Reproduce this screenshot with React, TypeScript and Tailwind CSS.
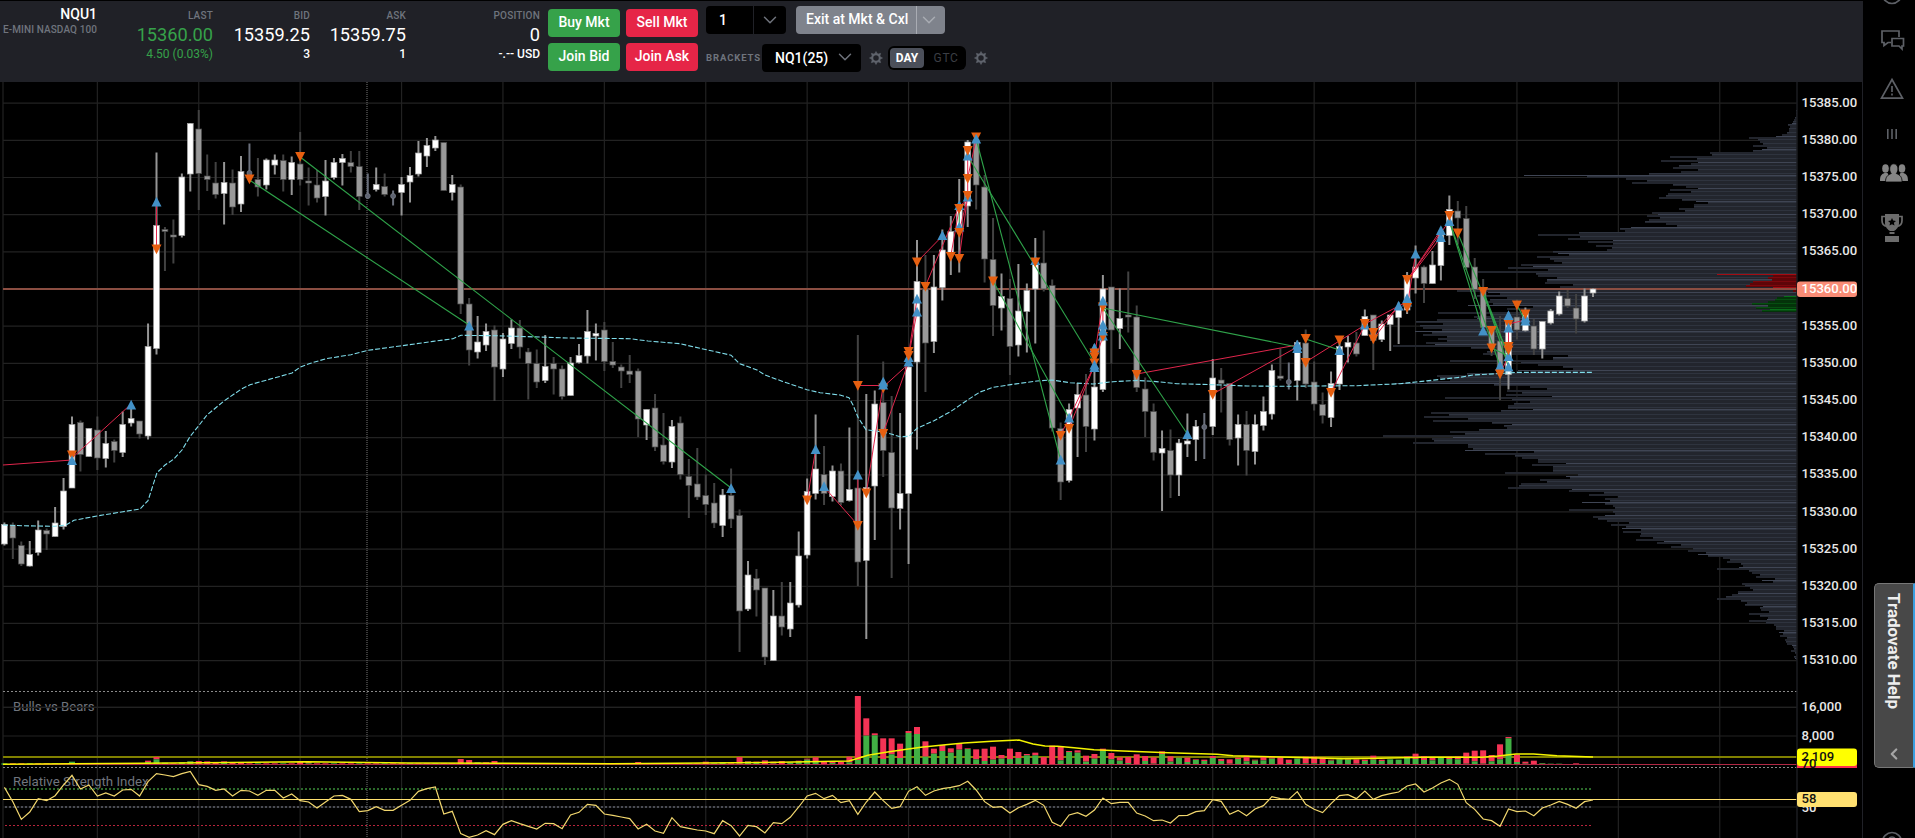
import { ChevronDown, ChevronLeft } from "lucide-react";

type Kind = "u" | "d" | "n";
type Candle = [Kind, number, number, number, number];

const STEP = 8.45;
const X0 = 4.4;
const AXIS = 1797;
const cx = (i: number) => X0 + STEP * i;

// kind, high, body top, body bottom, low
const CANDLES: Candle[] = [
  ["u", 522.5, 524.5, 544, 545.5], ["d", 522.5, 525, 538, 559], ["d", 541.5, 545.5, 564, 566], ["u", 541, 554.5, 566, 566.5],
  ["u", 520.5, 530, 552.5, 555.5], ["d", 528.5, 530.5, 534, 550], ["u", 507, 523, 536.5, 536.5], ["u", 478, 491, 526.5, 529.5],
  ["u", 416.5, 424.5, 488, 488], ["d", 420.5, 422.5, 454.5, 471.5], ["u", 428.5, 428.5, 456.5, 456.5], ["d", 416.5, 430, 458, 470],
  ["u", 431, 443.5, 458.5, 467.5], ["d", 439.5, 441.5, 450.5, 462.5], ["u", 411.5, 424.5, 452.5, 457], ["u", 408, 418.5, 423, 426.5],
  ["d", 421, 421, 434, 438.5], ["u", 323.5, 346.5, 436, 439.5], ["u", 152.5, 225.5, 348.5, 354.5], ["d", 227, 229.5, 231.5, 271],
  ["d", 219.5, 235, 237, 263.5], ["u", 173.5, 177, 235.5, 237.5], ["u", 123, 123.5, 174, 191.5], ["d", 110, 129, 173.5, 210],
  ["d", 154.5, 176, 179.5, 191], ["d", 162, 183, 194.5, 198.5], ["u", 162, 182.5, 193.5, 224.5], ["d", 169.5, 183, 207, 215],
  ["u", 156, 171.5, 204, 212], ["n", 143.5, 172, 174, 182], ["d", 158, 179.5, 187, 196.5], ["u", 158.5, 160, 185, 189.5],
  ["u", 154.5, 160, 165, 174.5], ["d", 154.5, 160.5, 179.5, 191.5], ["u", 156.5, 162.5, 179.5, 195], ["d", 132, 164, 179.5, 185.5],
  ["d", 167.5, 181, 183, 205.5], ["d", 170, 185, 198, 202.5], ["u", 160, 181, 196.5, 215.5], ["u", 158, 162.5, 177.5, 179.5],
  ["u", 154, 158.5, 162.5, 185.5], ["d", 151, 162.5, 166.5, 172.5], ["d", 151, 166.5, 196.5, 210], ["n", 173.5, 195, 197, 198.5],
  ["u", 167.5, 184.5, 189.5, 191.5], ["d", 173.5, 186.5, 194.5, 196.5], ["n", 190.5, 195, 197, 205.5], ["u", 177, 184.5, 192.5, 215.5],
  ["u", 167, 175.5, 182, 202.5], ["u", 141, 153, 174, 176.5], ["u", 138, 145.5, 156, 167], ["u", 136, 140, 148, 151],
  ["d", 142.5, 142.5, 190.5, 190.5], ["u", 175, 184.5, 192.5, 200.5], ["d", 184.5, 187, 304, 314], ["d", 298, 304, 350, 365.5],
  ["u", 316, 342, 352, 358.5], ["u", 323.5, 331.5, 345, 351], ["d", 325.5, 330, 367, 401], ["u", 333, 339, 369, 377],
  ["u", 319.5, 328, 343.5, 349], ["d", 320, 328, 347, 358.5], ["d", 348, 352, 363.5, 399.5], ["d", 349.5, 363.5, 382, 388],
  ["u", 335, 366.5, 380.5, 383], ["d", 357, 363.5, 369, 394.5], ["d", 365.5, 369, 396.5, 399.5], ["u", 357, 363, 395.5, 395.5],
  ["u", 344, 355.5, 362.5, 363.5], ["u", 310, 331.5, 356, 363.5], ["u", 323.5, 333.5, 336, 360.5], ["d", 322, 330, 361.5, 371],
  ["d", 342, 361.5, 365, 368], ["d", 364.5, 367, 371, 388], ["d", 355, 371, 374.5, 383], ["d", 368.5, 371, 419, 437],
  ["u", 409.5, 409.5, 425, 440], ["d", 394, 408, 447, 451], ["d", 413, 445, 461.5, 464.5], ["u", 420, 426.5, 462, 468],
  ["d", 416.5, 423, 474.5, 479.5], ["d", 459, 476.5, 485.5, 518], ["d", 448, 484, 497, 500], ["d", 474.5, 495.5, 504.5, 515],
  ["d", 483, 503, 523, 528], ["u", 489, 495, 525.5, 537], ["d", 468.5, 495.5, 519, 528], ["d", 509.5, 515.5, 611, 652],
  ["u", 561, 575, 609, 611], ["d", 569, 578.5, 590, 616.5], ["d", 588, 588, 657, 665], ["u", 590, 616, 660.5, 660.5],
  ["d", 582, 616, 627, 635.5], ["u", 582, 603, 629, 637], ["u", 531.5, 556, 605, 607.5], ["u", 478.5, 491.5, 555, 558.5],
  ["u", 414.5, 469, 493.5, 499.5], ["d", 446, 474.5, 493.5, 505], ["u", 465.5, 471, 496.5, 501.5], ["d", 463.5, 471, 502.5, 505.5],
  ["u", 427.5, 489.5, 500.5, 501.5], ["d", 335, 488, 562, 586], ["u", 394, 487.5, 560.5, 639], ["u", 390.5, 404, 486, 540],
  ["d", 361.5, 402.5, 450.5, 477], ["d", 396, 452.5, 508, 578], ["u", 413, 493.5, 508.5, 529.5], ["u", 363, 367, 493.5, 564],
  ["u", 240, 281.5, 362, 449.5], ["d", 255, 289, 343, 392], ["u", 255, 287, 341.5, 353], ["u", 229.5, 250, 287.5, 300.5],
  ["u", 216, 231.5, 253, 275], ["u", 179, 208.5, 230, 272.5], ["u", 140, 142, 206, 227], ["d", 137, 140, 185, 209.5],
  ["d", 175, 187, 259, 282.5], ["d", 218, 259.5, 305.5, 336], ["u", 273.5, 296.5, 308, 330.5], ["d", 279, 298.5, 346.5, 375],
  ["u", 264, 311, 345, 356.5], ["u", 283.5, 290.5, 311.5, 352.5], ["u", 238, 263, 289, 343.5], ["d", 230.5, 263, 289, 291.5],
  ["d", 279.5, 285.5, 428, 431.5], ["d", 422.5, 428.5, 482, 500], ["u", 403.5, 409.5, 480.5, 482.5], ["u", 383, 394.5, 408, 457],
  ["d", 374, 395, 426.5, 452], ["u", 344.5, 387, 429, 440.5], ["u", 275, 289, 389.5, 392], ["d", 287, 287, 330, 363.5],
  ["u", 288.5, 318.5, 328.5, 349], ["d", 271.5, 315, 317, 332.5], ["d", 305.5, 317, 387.5, 392], ["d", 377.5, 389, 411.5, 437],
  ["d", 403.5, 411.5, 452.5, 460.5], ["u", 430.5, 448.5, 453, 511], ["d", 429.5, 450.5, 475, 498], ["u", 439, 443, 475, 496],
  ["u", 413.5, 441, 444, 457], ["u", 420, 426.5, 439.5, 461], ["n", 413, 426, 428, 459], ["u", 359, 378, 426.5, 435],
  ["d", 368, 380, 383.5, 412.5], ["d", 383.5, 383.5, 439.5, 445.5], ["u", 414.5, 424.5, 438, 465.5], ["d", 411, 424.5, 450.5, 475.5],
  ["u", 414.5, 424.5, 451.5, 464.5], ["u", 396.5, 411.5, 425.5, 430.5], ["u", 364.5, 370.5, 414, 419.5], ["d", 348.5, 376, 378.5, 380.5],
  ["n", 362.5, 381, 383, 389.5], ["u", 340.5, 342.5, 380.5, 400.5], ["d", 329.5, 343, 384, 388], ["d", 361.5, 382, 404, 410.5],
  ["d", 392.5, 404.5, 415.5, 423.5], ["u", 371.5, 383.5, 417.5, 427], ["u", 342.5, 346.5, 384, 390], ["u", 336, 342.5, 347, 362.5],
  ["d", 332, 343, 354, 356.5], ["u", 309.5, 316.5, 335.5, 335.5], ["d", 315, 315, 340.5, 370], ["u", 320.5, 324, 339.5, 342],
  ["u", 315, 315, 324.5, 351], ["u", 302.5, 309.5, 317.5, 344], ["u", 272, 278.5, 310, 314], ["u", 245.5, 267, 278, 293.5],
  ["d", 265.5, 267, 283.5, 303], ["u", 251, 265, 283.5, 283.5], ["u", 227, 235, 265.5, 280.5], ["u", 195.5, 209.5, 235.5, 245],
  ["d", 201, 211, 218, 244.5], ["d", 206, 218.5, 267.5, 270], ["d", 258, 267, 289.5, 299], ["d", 279, 289.5, 327.5, 332.5],
  ["d", 327, 330.5, 348, 356], ["d", 316, 341, 367, 400], ["u", 312.5, 317.5, 374.5, 389.5], ["d", 299.5, 317, 330, 339.5],
  ["u", 307.5, 311.5, 330.5, 331.5], ["d", 319, 326, 349, 355], ["u", 321.5, 321.5, 349, 358.5], ["u", 309, 311, 323, 324.5],
  ["u", 291.5, 296, 314, 315.5], ["d", 290, 298.5, 306, 308], ["d", 294, 308, 319, 333.5], ["u", 288.5, 296, 321, 322.5],
  ["u", 288.5, 289, 293, 297],
];

const VWAP =
  "3,525 22,525.7 55,526.3 66,525 74,520.3 97,516 123,511.7 140,509 148,500.7 157,472.7 165,465 173.5,459.3 182,450 190,436.7 199,425.3 207,415 224,401 241,389.3 250,384.7 267,380 292,373 300,367.3 309,363.7 326,358.7 351,354.7 368,350.3 400,346 433,341.4 453,338.7 461,335.3 493,335.7 520,336.4 567,338 630,338.7 648,341 680,343.7 700,348.3 731,355.2 739.5,363.6 757,370 765,375 782,381.2 793,385 807,389.7 820,392.7 840,395 849,397.7 853,405 858,417.3 866,429.7 883,432 892,434.3 900,436.7 909,436.3 917,428.3 934,420.7 951,411.3 968,399.7 980,392 993,387.3 1013,384.3 1037,381 1052,380 1070,382.7 1093,384 1113,381.7 1137,380.5 1153,381.3 1177,383.7 1213,384.7 1247,386 1287,386.3 1313,386 1357,385.7 1400,383.7 1416,382 1460,377.3 1473,375 1500,373.5 1517,372.4 1593,372.4";

// b = buy arrow, s = sell arrow; later entries are drawn on top
const MARKS: ["b" | "s", number, number][] = [
  ["s", 8, 455], ["b", 8, 460.5], ["b", 15, 405], ["b", 18, 202], ["s", 18, 249], ["s", 29, 179], ["s", 35, 156.5],
  ["b", 55, 326], ["b", 86, 488.5], ["s", 95, 500], ["b", 96, 449.5], ["b", 97, 486.5], ["s", 101, 385.5], ["b", 101, 475],
  ["s", 101, 525.5], ["s", 102, 493], ["s", 104, 388], ["b", 104, 382], ["b", 104, 385], ["s", 104, 433.5], ["b", 107, 357.5],
  ["b", 107, 362], ["s", 107, 351.5], ["s", 107, 355.5], ["s", 108, 262], ["b", 108, 299], ["b", 108, 312], ["s", 109, 286.5],
  ["b", 111, 235.5], ["s", 112, 256.5], ["b", 113, 205.5], ["s", 113, 208.5], ["b", 113, 227], ["s", 113, 232.5], ["s", 113, 258.5],
  ["b", 114, 156], ["s", 114, 150.5], ["s", 114, 178.5], ["b", 114, 197], ["s", 114, 195.5], ["s", 115, 137], ["b", 115, 139],
  ["s", 117, 281], ["b", 122, 260.5], ["s", 122, 262], ["s", 125, 435.5], ["b", 125, 460], ["s", 126, 428.5], ["b", 126, 418],
  ["b", 129, 348], ["s", 129, 353], ["s", 129, 357], ["s", 129, 363], ["b", 129, 365], ["b", 129, 367.5], ["s", 130, 307],
  ["b", 130, 301], ["b", 130, 325], ["b", 130, 336], ["s", 130, 336.5], ["b", 130, 331], ["s", 134, 374.5], ["b", 140, 434.5],
  ["s", 143, 394.5], ["b", 153, 345], ["b", 153, 348.5], ["s", 154, 338.5], ["s", 154, 362.5], ["s", 157, 392.5], ["s", 158, 340],
  ["b", 158, 350.5], ["b", 161, 325], ["s", 161, 323.5], ["s", 162, 332.5], ["s", 162, 339], ["b", 165, 306], ["s", 166, 279.5],
  ["b", 166, 302], ["b", 166, 298.5], ["s", 166, 307.5], ["b", 167, 254], ["b", 170, 237.5], ["b", 170, 230.5], ["b", 171, 221.5],
  ["s", 171, 215.5], ["s", 172, 233], ["b", 175, 331], ["s", 175, 291.5], ["s", 176, 330.5], ["s", 176, 348], ["b", 177, 366],
  ["s", 177, 374], ["s", 178, 324], ["b", 178, 315.5], ["b", 178, 328], ["b", 178, 356.5], ["s", 178, 346.5], ["s", 178, 350],
  ["b", 178, 367], ["s", 179, 305], ["b", 180, 318], ["b", 180, 321], ["s", 180, 314],
];

const LOSSES = [
  [8, 458, 15, 404], [18, 202, 18, 249], [95, 500, 96, 450], [97, 487, 101, 525], [101, 475, 101, 525], [102, 493, 104, 385],
  [101, 385.5, 104, 385.5], [104, 387, 107, 364], [104, 433, 107, 362], [107, 355, 108, 299], [107, 357, 108, 312],
  [108, 262, 111, 236], [109, 286, 113, 206], [112, 256, 113, 208], [113, 258, 114, 196], [113, 232, 114, 196], [113, 206, 114, 200],
  [114, 178, 115, 139], [114, 196, 114, 156], [125, 435, 126, 418], [126, 428, 129, 365], [126, 418, 129, 365], [129, 357, 130, 301],
  [129, 363, 130, 336], [130, 301, 130, 336], [134, 374, 153, 345], [143, 394, 153, 347], [154, 362, 161, 325], [157, 392, 161, 325],
  [161, 324, 165, 306], [162, 339, 165, 306], [162, 333, 165, 306], [165, 306, 166, 302], [166, 307, 167, 254], [166, 280, 170, 230],
  [166, 281, 170, 237], [166, 280, 171, 221], [177, 374, 178, 356], [178, 324, 178, 350], [178, 324, 180, 320],
];

const WINS = [
  [29, 180, 55, 325], [35, 157, 86, 488], [113, 208, 113, 227], [114, 156, 129, 363], [115, 139, 125, 460], [117, 281, 126, 418],
  [130, 308, 153, 347], [130, 308, 140, 434], [154, 339, 158, 350], [171, 221, 177, 366], [171, 221, 175, 331], [172, 233, 178, 356],
  [175, 291, 178, 356], [176, 348, 178, 356], [175, 291, 178, 367], [179, 305, 180, 321],
];

// left edge of every volume-at-price row, one row per tick going down
const PROFILE = [
  1249, 1249, 1248, 1247, 1245, 1243, 1240, 1236, 1224, 1231, 1228, 1226, 1222, 1205, 1188, 1107, 1133, 1139, 1148, 1120, 1160, 1145, 1120,
  990, 996, 870, 950, 842, 955, 933, 897, 878, 953, 903, 807, 433, 621, 738, 802, 755, 880, 918, 955, 870, 932, 863, 858, 838, 905, 947,
  985, 942, 942, 897, 915, 816, 835, 800, 840, 808, 795, 857, 890, 753, 720, 735, 597, 475, 600, 564, 700, 625, 700, 648, 697, 680, 520,
  533, 567, 472, 510, 522, 545, 423, 460, 384, 505, 280, 468, 474, 530, 500, 500, 495, 578, 540, 215, 232, 325, 360, 290, 380, 330, 310,
  340, 263, 460, 380, 420, 175, 330, 283, 290, 172, 108, 190, 120, 128, 185, 105, 157, 128, 200, 175, 200, 138, 165, 40, 272, 345, 320,
  310, 563, 520, 520, 210, 423, 475, 550, 580, 415, 450, 260, 170, 180, 210, 140, 45, 343, 450, 500, 380, 425, 377, 515, 195, 395, 450,
  403, 385, 385, 458, 362, 152, 207, 133, 265, 160, 335, 395, 372, 380, 297, 210, 255, 10, 220, 155, 163, 100, 265, 265, 280, 255, 462,
  315, 405, 427, 475, 475, 558, 457, 520, 518, 520, 375, 595, 558, 570, 480, 500, 422, 417, 383, 575, 567, 673, 627, 715, 675, 690, 605,
  675, 700, 705, 568, 698, 706, 675, 640, 655, 680, 748, 693, 738, 725, 783, 730, 783, 780, 818, 767, 852, 832, 903, 873, 940, 923, 978,
  955, 985, 1030, 1050, 1040, 1083, 1088, 1077, 1012, 1107, 1115, 1140, 1127, 1185, 1145, 1180, 1085, 1095, 1110, 1120, 1075, 1073, 1057,
  1037, 1012, 1083, 1100, 1095, 1148, 1140, 1143, 1168, 1108, 1140, 1165, 1160, 1107, 1158, 1183, 1187, 1187, 1213, 1198, 1210, 1200,
  1220, 1215, 1217, 1222, 1235, 1240, 1243, 1233, 1245, 1248, 1243, 1245, 1247,
];
const ASKS = [1012, 1178, 1165, 1175, 1118, 1110, 1097, 1180, 1180, 1240];
const BIDS = [1213, 1190, 1185, 1165, 1115, 1165, 1127, 1170, 1147];

// total top, bull top
const VOLUME: Record<number, [number, number]> = {
  8: [245, 245], 17: [242, 246], 18: [231, 238], 19: [248, 248], 21: [247, 247], 22: [243, 244], 23: [243, 252], 24: [244, 252],
  25: [246, 252], 26: [244, 247], 27: [246, 252], 28: [248, 252], 35: [245, 252], 36: [246, 250], 54: [237, 251], 55: [240, 249],
  56: [246, 247], 57: [247, 250], 58: [243, 249], 75: [246, 252], 76: [249, 250], 83: [245, 252], 85: [246, 247], 87: [231, 251],
  88: [243, 245], 89: [245, 248], 90: [241, 252], 91: [245, 251], 92: [243, 252], 93: [247, 248], 94: [242, 245], 95: [236, 239],
  96: [232, 246], 97: [243, 252], 98: [246, 249], 99: [246, 252], 100: [230, 247], 101: [48, 240], 102: [115, 167], 103: [160, 166],
  104: [175, 237], 105: [175, 223], 106: [191, 234], 107: [153, 159], 108: [141, 162], 109: [184, 230], 110: [206, 221],
  111: [195, 213], 112: [205, 218], 113: [192, 209], 114: [205, 207], 115: [208, 238], 116: [206, 243], 117: [200, 239],
  118: [225, 236], 119: [206, 237], 120: [216, 234], 121: [222, 226], 122: [218, 226], 123: [231, 252], 124: [197, 252],
  125: [199, 241], 126: [213, 216], 127: [211, 218], 128: [227, 245], 129: [222, 236], 130: [206, 213], 131: [219, 238],
  132: [232, 242], 133: [231, 249], 134: [223, 252], 135: [228, 243], 136: [232, 251], 137: [214, 222], 138: [229, 245],
  139: [232, 233], 140: [233, 246], 141: [238, 240], 142: [239, 243], 143: [228, 234], 144: [237, 243], 145: [238, 251],
  146: [233, 237], 147: [227, 244], 148: [239, 242], 149: [231, 241], 150: [231, 236], 151: [231, 252], 152: [239, 249],
  153: [235, 236], 154: [230, 250], 155: [230, 250], 156: [232, 249], 157: [239, 242], 158: [236, 238], 159: [234, 239],
  160: [238, 251], 161: [239, 243], 162: [227, 239], 163: [239, 243], 164: [238, 238], 165: [239, 239], 166: [229, 231],
  167: [221, 237], 168: [228, 240], 169: [232, 241], 170: [232, 234], 171: [230, 237], 172: [229, 238], 173: [218, 251],
  174: [212, 244], 175: [211, 251], 176: [225, 244], 177: [193, 238], 178: [171, 175], 179: [224, 246], 180: [245, 251],
  181: [242, 252], 182: [249, 250], 183: [251, 251], 184: [251, 251], 185: [252, 252], 186: [250, 252], 187: [252, 252], 188: [252, 252],
};

const VOLUME_MA =
  "3,764.3 143,763.3 204,762.7 306,761.7 408,763 612,763.7 735,762.7 780,762.3 849,761 858,758.3 868,755.3 886,752.3 906.5,749.3 921,747.3 943,745 964,743 992,741.3 1019,740 1033,744 1045,746 1057.5,746.3 1074,747.7 1094,749.7 1123,751 1168,752.7 1217,754.3 1233,755.7 1270,756.7 1310,757.7 1343,758.7 1380,758.3 1424,757.3 1482,757.3 1498,756 1516,754 1533.5,754 1557,755.7 1593,757";

const RSI = [
  322, 365, 418, 396, 356, 362, 347, 315, 286, 327, 315, 348, 339, 348, 330, 328, 348, 305, 281, 285, 290, 281, 274, 314, 319, 331, 327, 348,
  331, 333, 346, 331, 331, 354, 342, 362, 366, 384, 366, 348, 346, 358, 395, 392, 380, 391, 391, 376, 361, 334, 326, 321, 402, 394, 461, 472,
  465, 452, 464, 433, 422, 431, 439, 447, 430, 431, 446, 405, 397, 373, 376, 402, 406, 411, 416, 447, 433, 453, 460, 413, 440, 445, 450, 453,
  461, 422, 437, 468, 436, 440, 459, 428, 431, 412, 381, 348, 340, 356, 346, 368, 362, 403, 366, 336, 362, 385, 380, 334, 320, 346, 333, 326,
  322, 317, 304, 330, 365, 382, 380, 399, 383, 373, 361, 376, 427, 439, 405, 398, 409, 390, 354, 371, 367, 367, 399, 408, 422, 420, 429, 407,
  406, 395, 392, 359, 364, 403, 391, 407, 387, 377, 350, 356, 358, 335, 373, 388, 398, 371, 347, 344, 356, 333, 358, 347, 341, 336, 318, 312,
  336, 324, 309, 298, 313, 368, 388, 417, 422, 439, 387, 395, 393, 407, 384, 375, 364, 373, 385, 365, 360,
];

const PRICES = Array.from({ length: 16 }, (_, i) => 15385 - i * 5);
const priceY = (p: number) => 289 - (p - 15360) * 7.432;
const paneY = (v: number) => 680 + v / 3;
const profileX = (v: number) => 1380 + v / 3;

const CANDLE_STYLE = {
  u: { body: "#ffffff", edge: "#a3a3a3", wick: "#959595" },
  d: { body: "#999999", edge: "#484848", wick: "#424242" },
  n: { body: "#5d6270", edge: "#5d6270", wick: "#6b707c" },
};

function ProfileRows({ rows, from, fill, line }: { rows: number[]; from: number; fill: string; line: string }) {
  return (
    <g shapeRendering="crispEdges">
      {rows.map((v, i) => {
        const y = from + i * 1.858;
        const top = Math.floor(y);
        const shared = Math.floor(y + 1.858) - top < 2;
        const x = profileX(v);
        return (
          <g key={i}>
            <rect x={x} y={top} width={AXIS - x} height={shared ? 1 : 2} fill={fill} />
            {(shared || i % 2 === 0) && <rect x={x} y={top} width={AXIS - x} height={1} fill={line} opacity={shared ? 1 : 0.45} />}
          </g>
        );
      })}
    </g>
  );
}

function PriceChart() {
  return (
    <svg viewBox="0 82 1863 756" width={1863} height={756} className="block font-['Roboto',sans-serif]">
      <rect x={0} y={82} width={1863} height={756} fill="#000" />

      {/* Grid */}
      <g stroke="#222222" strokeWidth={1.2}>
        {PRICES.map((p) => (
          <line key={p} x1={3} x2={AXIS} y1={priceY(p)} y2={priceY(p)} />
        ))}
        {[707.3, 736, 807].map((y) => (
          <line key={y} x1={3} x2={AXIS} y1={y} y2={y} />
        ))}
        {Array.from({ length: 17 }, (_, i) => (
          <line key={i} x1={cx(11 + i * 12)} x2={cx(11 + i * 12)} y1={82} y2={838} />
        ))}
        <line x1={3} x2={3} y1={82} y2={838} />
      </g>
      <line x1={367} x2={367} y1={82} y2={838} stroke="#777" strokeDasharray="1 1" />

      <ProfileRows rows={PROFILE} from={110} fill="#22252d" line="#3f4554" />
      <ProfileRows rows={ASKS} from={274} fill="#5e0508" line="#a50c12" />
      <ProfileRows rows={BIDS} from={296} fill="#04330a" line="#08701a" />

      {/* Last price */}
      <line x1={3} x2={AXIS} y1={289} y2={289} stroke="#8b4e42" strokeWidth={2} />

      {CANDLES.map(([kind, high, top, bottom, low], i) => {
        const s = CANDLE_STYLE[kind];
        const x = cx(i);
        return (
          <g key={i}>
            <line x1={x} x2={x} y1={high} y2={low} stroke={s.wick} strokeWidth={2} />
            {kind === "n" ? (
              <circle cx={x} cy={(top + bottom) / 2} r={2.5} fill={s.body} stroke="#7a7f8a" strokeWidth={0.7} />
            ) : (
              <rect x={x - 2.9} y={top} width={5.8} height={Math.max(bottom - top, 1.5)} fill={s.body} stroke={s.edge} strokeWidth={0.7} />
            )}
          </g>
        );
      })}

      <polyline points={VWAP} fill="none" stroke="#7fdcea" strokeWidth={1.1} strokeDasharray="5 2" />

      {/* Trades */}
      <g stroke="#e0264c" strokeWidth={1}>
        <line x1={3} y1={465} x2={72} y2={460} />
        {LOSSES.map(([a, y1, b, y2], i) => (
          <line key={i} x1={cx(a)} y1={y1} x2={cx(b)} y2={y2} />
        ))}
      </g>
      <g stroke="#2fa34a" strokeWidth={1.1}>
        {WINS.map(([a, y1, b, y2], i) => (
          <line key={i} x1={cx(a)} y1={y1} x2={cx(b)} y2={y2} />
        ))}
      </g>
      {MARKS.map(([side, i, y], n) => {
        const x = cx(i);
        return side === "b" ? (
          <path key={n} d={`M${x} ${y - 5.2}l5 9.8h-10z`} fill="#4391c7" />
        ) : (
          <path key={n} d={`M${x} ${y + 5.2}l5 -9.8h-10z`} fill="#e65f10" />
        );
      })}

      {/* Bulls vs Bears */}
      <text x={13} y={710.5} fontSize={13.1} fill="#70757e">Bulls vs Bears</text>
      <line x1={3} x2={AXIS} y1={707.3} y2={707.3} stroke="#222222" strokeWidth={1.2} />
      <line x1={3} x2={AXIS} y1={691.5} y2={691.5} stroke="#8a8a8a" strokeDasharray="2 2" />
      <line x1={3} x2={AXIS} y1={757} y2={757} stroke="#808000" strokeWidth={2} />
      {CANDLES.map((_, i) => {
        const [top, bull] = VOLUME[i] ?? [250, i % 3 === 0 ? 250 : 253];
        return (
          <g key={i}>
            <rect x={cx(i) - 3} y={paneY(top)} width={6} height={(bull - top) / 3} fill="#f53355" />
            <rect x={cx(i) - 3} y={paneY(bull)} width={6} height={(254 - bull) / 3} fill="#41b044" />
          </g>
        );
      })}
      <line x1={3} x2={AXIS} y1={764.5} y2={764.5} stroke="#b02844" />
      <polyline points={VOLUME_MA} fill="none" stroke="#f4f400" strokeWidth={1.5} />
      <line x1={3} x2={AXIS} y1={767.5} y2={767.5} stroke="#8a8a8a" strokeDasharray="2 2" />

      {/* RSI */}
      <text x={13} y={786} fontSize={13.3} fill="#70757e">Relative Strength Index</text>
      <line x1={5} x2={1593} y1={789} y2={789} stroke="#2c6a2b" strokeWidth={2} strokeDasharray="2 2" />
      <line x1={5} x2={1593} y1={807} y2={807} stroke="#4a4c54" strokeWidth={2} strokeDasharray="2 2" />
      <line x1={5} x2={1593} y1={825.5} y2={825.5} stroke="#b8243c" strokeDasharray="2 2" />
      <line x1={3} x2={AXIS} y1={799.5} y2={799.5} stroke="#ffe070" />
      <polyline points={RSI.map((v, i) => `${cx(i)},${paneY(v)}`).join(" ")} fill="none" stroke="#f2d76e" strokeWidth={1.2} />

      {/* Axis */}
      <line x1={AXIS} x2={AXIS} y1={82} y2={838} stroke="#1b1c20" strokeWidth={1.5} />
      <line x1={1862.5} x2={1862.5} y1={82} y2={838} stroke="#202127" />
      <g fontSize={13.1} fontWeight={500} fill="#e8e8e8">
        {PRICES.filter((p) => p !== 15360).map((p) => (
          <text key={p} x={1801.5} y={priceY(p) + 3.6}>{p.toFixed(2)}</text>
        ))}
        <text x={1801.5} y={711.3}>16,000</text>
        <text x={1801.5} y={739.7}>8,000</text>
        <text x={1801.5} y={811.5}>50</text>
        <rect x={1797} y={281.5} width={60} height={15.5} rx={3} fill="#f98c76" />
        <text x={1801.5} y={292.7} fill="#fff">15360.00</text>
        <rect x={1797} y={758} width={60} height={10} fill="#ff3050" />
        <rect x={1797} y={748.5} width={60} height={17.5} rx={3} fill="#ffff00" />
        <text x={1801.5} y={768} fill="#111">70</text>
        <text x={1801.5} y={760.7} fill="#111">2,109</text>
        <rect x={1797} y={792} width={60} height={15} rx={3} fill="#ffe070" />
        <text x={1801.5} y={803.2} fill="#111">58</text>
      </g>
    </svg>
  );
}

function Gear() {
  return (
    <svg width={14} height={14} viewBox="-7 -7 14 14" className="ml-2 text-[#60646d]" fill="none" stroke="currentColor">
      <circle r={3.7} strokeWidth={1.9} />
      {[0, 45, 90, 135, 180, 225, 270, 315].map((a) => (
        <path key={a} d="M-1.300 -4.200L0 -6.600L1.300 -4.200z" transform={`rotate(${a})`} fill="currentColor" strokeWidth={0.5} />
      ))}
    </svg>
  );
}

function Quote({ label, value, sub, tone, className }: { label: string; value: string; sub: string; tone?: string; className: string }) {
  return (
    <div className={`text-right ${className} ${tone ?? "font-medium text-white"}`}>
      <div className="text-[10px] leading-3 font-medium tracking-[0.2px] text-[#6f747d]">{label}</div>
      <div className="mt-1 text-[18.200px] leading-[18px] font-normal">{value}</div>
      <div className="mt-[3px] text-[12px] leading-[14px]">{sub}</div>
    </div>
  );
}

function Header() {
  return (
    <header className="flex h-[82px] shrink-0 border-t border-black bg-[#202127]">
      <div className="w-[97px] pt-[5px] text-right">
        <div className="text-[14px] leading-4 font-medium text-white">NQU1</div>
        <div className="mt-[2px] text-[10px] leading-3 font-medium tracking-[0.1px] whitespace-nowrap text-[#6f747d]">E-MINI NASDAQ 100</div>
      </div>
      <Quote className="w-[116px] pt-[9px]" label="LAST" value="15360.00" sub="4.50 (0.03%)" tone="text-[#36a24a]" />
      <Quote className="w-[97px] pt-[9px]" label="BID" value="15359.25" sub="3" />
      <Quote className="w-[96px] pt-[9px]" label="ASK" value="15359.75" sub="1" />
      <Quote className="w-[134px] pt-[9px]" label="POSITION" value="0" sub="-.-- USD" />

      <div className="mt-2 ml-2 grid h-[62px] grid-cols-[72px_72px] grid-rows-[28px_28px] gap-[6px] text-[14px] font-medium text-white">
        <button className="rounded bg-[#36a24a] pb-[2px]">Buy Mkt</button>
        <button className="rounded bg-[#e62547] pb-[2px]">Sell Mkt</button>
        <button className="rounded bg-[#36a24a] pb-[2px]">Join Bid</button>
        <button className="rounded bg-[#e62547] pb-[2px]">Join Ask</button>
      </div>

      <div className="ml-2 pt-[5px] text-[14px] font-medium text-white">
        <div className="flex gap-[10px]">
          <div className="flex h-7 w-20 items-center rounded bg-black">
            <span className="w-[47px] pl-[13px]">1</span>
            <span className="flex h-full flex-1 items-center justify-center border-l border-[#202127]">
              <ChevronDown size={22} strokeWidth={1.6} className="text-[#6f737c]" />
            </span>
          </div>
          <div className="flex h-7 w-[149px] items-center rounded bg-[#7f838c]">
            <span className="w-[120px] pl-[10px] pb-[2px] whitespace-nowrap">Exit at Mkt &amp; Cxl</span>
            <span className="flex h-full flex-1 items-center justify-center border-l border-[#a9acb3] pr-1">
              <ChevronDown size={22} strokeWidth={1.6} className="text-[#a9acb3]" />
            </span>
          </div>
        </div>
        <div className="mt-[10px] flex h-7 items-center">
          <span className="w-14 text-[9.5px] font-bold tracking-[0.9px] text-[#6f747d]">BRACKETS</span>
          <div className="flex h-7 w-[99px] items-center justify-between rounded bg-black pr-[5px] pl-[13px]">
            NQ1(25)
            <ChevronDown size={22} strokeWidth={1.6} className="mb-[3px] text-[#6f737c]" />
          </div>
          <Gear />
          <div className="ml-[5px] flex h-6 w-[78px] items-center rounded-md bg-black px-[2px] text-[12px]">
            <span className="flex h-5 w-[34px] items-center justify-center rounded bg-[#4b4f5a] font-bold">DAY</span>
            <span className="flex-1 pl-1 text-center font-normal tracking-[0.6px] text-[#3b3e44]">GTC</span>
          </div>
          <Gear />
        </div>
      </div>
    </header>
  );
}

function Sidebar() {
  return (
    <aside className="w-[52px] shrink-0 bg-black">
      <svg width={52} height={300} viewBox="1863 0 52 300" fill="none" stroke="#5d6066" strokeWidth={1.7} className="block">
        <circle cx={1892} cy={-6} r={9.5} />
        {/* Chat */}
        <path d="M1891 42.500h-3l-4 3v-3h-2V31h17v6" />
        <path d="M1892 38.500h11.500v7.500h-1.500v3l-3-3h-7z" />
        {/* Alert */}
        <path d="M1892 79.500l10.500 18.700h-21z" />
        <path d="M1892 86v6M1892 93.500v2" />
        <path d="M1887.800 129v10M1892 129v10M1896.200 129v10" strokeWidth={1.6} />
        {/* Community */}
        <g fill="#858585" stroke="none">
          <ellipse cx={1885.5} cy={168.5} rx={3.3} ry={4.3} />
          <ellipse cx={1902} cy={168.5} rx={3.3} ry={4.3} />
          <path d="M1880 181c0-6 2-7 4.500-8h3l1 2v6zM1908 181c0-6-2-7-4.500-8h-3l-1 2v6z" />
          <g stroke="#000" strokeWidth={0.8}>
            <path d="M1885.500 182c0-5 2-7 5.800-8.500-2.800-3-2-9.700 2.500-9.700s5.300 6.700 2.500 9.700c3.800 1.500 5.800 3.500 5.800 8.500z" />
          </g>
        </g>
        {/* Leaderboard */}
        <g fill="#6c6c6c" stroke="none">
          <path d="M1885 214h14v9c0 4-3 7-5 8h-4c-2-1-5-4-5-8z" />
          <path d="M1889.500 232h5v2h-5zM1885 236h14v6h-14z" />
          <path fill="#000" d="M1892 218l1.200 2.600 2.800.3-2.100 1.900.6 2.800-2.500-1.400-2.500 1.400.6-2.800-2.100-1.900 2.800-.3z" />
        </g>
        <path d="M1886 216.500h-4v4c0 3 2 5.500 5 6M1898 216.500h4v4c0 3-2 5.500-5 6" stroke="#6c6c6c" />
      </svg>
      <div className="mt-[283px] ml-[11px] flex h-[185px] w-[41px] flex-col items-center justify-between rounded-l-[5px] border border-r-2 border-[#777] border-r-[#3a9fe0] bg-[#484848] pt-[9px] pb-[4px]">
        <span className="text-[17px] leading-5 font-bold text-[#eee] [writing-mode:vertical-rl]">Tradovate Help</span>
        <ChevronLeft size={18} strokeWidth={3} className="text-[#a5a5a5]" />
      </div>
      <svg width={52} height={70} viewBox="1863 768 52 70" fill="none" stroke="#5d6066" strokeWidth={1.7} className="block">
        <circle cx={1892} cy={842} r={9.5} />
        <path d="M1889 840c0-4 6-4 6 0" />
      </svg>
    </aside>
  );
}

export default function App() {
  return (
    <div className="flex h-[838px] w-[1915px] overflow-hidden bg-black font-['Roboto',sans-serif]">
      <main className="flex w-[1863px] shrink-0 flex-col">
        <Header />
        <PriceChart />
      </main>
      <Sidebar />
    </div>
  );
}
